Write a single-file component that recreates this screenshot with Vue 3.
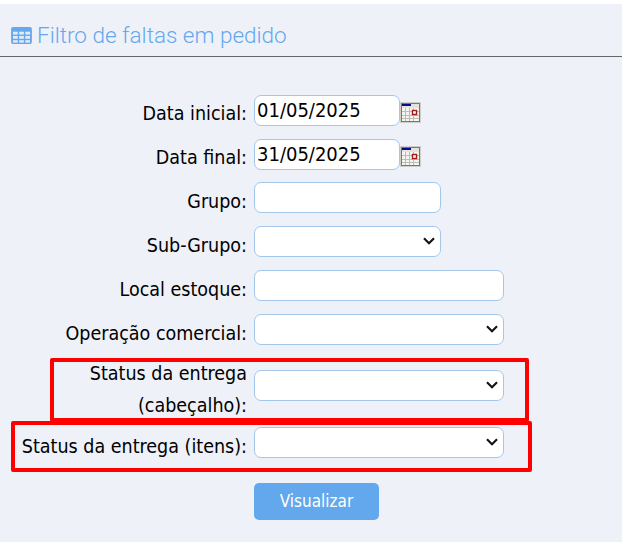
<script setup>
const rows = [
  { label: 'Data inicial:', type: 'date', value: '01/05/2025' },
  { label: 'Data final:', type: 'date', value: '31/05/2025' },
  { label: 'Grupo:', type: 'text', size: 'mid' },
  { label: 'Sub-Grupo:', type: 'select', size: 'mid' },
  { label: 'Local estoque:', type: 'text', size: 'wide' },
  { label: 'Operação comercial:', type: 'select', size: 'wide' },
  { label: 'Status da entrega (cabeçalho):', type: 'select', size: 'wide', tall: true },
  { label: 'Status da entrega (itens):', type: 'select', size: 'wide' },
];
</script>

<template>
  <div class="page">
    <div class="header">
      <svg class="table-icon" width="22" height="18" viewBox="0 0 22 18">
        <rect x="0" y="0" width="22" height="18" rx="2" fill="#66a8ee" />
        <g fill="#e3ecf8">
          <rect x="2" y="5" width="5" height="3" />
          <rect x="8.5" y="5" width="5" height="3" />
          <rect x="15" y="5" width="5" height="3" />
          <rect x="2" y="9.5" width="5" height="3" />
          <rect x="8.5" y="9.5" width="5" height="3" />
          <rect x="15" y="9.5" width="5" height="3" />
          <rect x="2" y="14" width="5" height="2.5" />
          <rect x="8.5" y="14" width="5" height="2.5" />
          <rect x="15" y="14" width="5" height="2.5" />
        </g>
      </svg>
      <span class="title">Filtro de faltas em pedido</span>
    </div>

    <form class="form" @submit.prevent>
      <div v-for="row in rows" :key="row.label" class="row" :class="{ tall: row.tall }">
        <label class="label">{{ row.label }}</label>
        <div class="control" :class="{ 'has-date': row.type === 'date' }">
          <template v-if="row.type === 'date'">
            <input class="field date" type="text" :value="row.value" />
            <svg class="cal" width="21" height="21" viewBox="0 0 21 21">
              <rect x="0" y="0" width="21" height="21" fill="#cfcfca" />
              <rect x="1" y="1" width="19" height="19" fill="#77777a" />
              <rect x="2" y="2" width="17" height="4" fill="#e4e4de" />
              <rect x="2" y="2" width="9" height="2" fill="#0a0a8c" />
              <rect x="2" y="6" width="17" height="13" fill="#f4f4f0" />
              <path d="M5.5 6v13M9.5 6v13M13.5 6v13M2 9.5h17M2 13.5h17M2 16.5h17" stroke="#bcbcb8" stroke-width="1" fill="none" />
              <rect x="12.5" y="8.5" width="4" height="4" fill="#fff" stroke="#a81818" stroke-width="1.4" />
            </svg>
          </template>
          <input v-else-if="row.type === 'text'" class="field" :class="row.size" type="text" />
          <select v-else class="field sel" :class="row.size"><option></option></select>
        </div>
      </div>

      <div class="row actions">
        <span class="label"></span>
        <button class="btn" type="button">Visualizar</button>
      </div>

      <div class="mark mark-one"></div>
      <div class="mark mark-two"></div>
    </form>
  </div>
</template>

<style>
html, body {
  margin: 0;
  background: #fff;
}
</style>

<style scoped>
.page {
  margin-top: 4px;
  width: 622px;
  height: 538px;
  background: #eef1f7;
  overflow: hidden;
  font-family: "DejaVu Sans", sans-serif;
  font-stretch: condensed;
  color: #000;
}
.header {
  display: flex;
  align-items: center;
  gap: 5px;
  height: 53px;
  box-sizing: border-box;
  padding: 10px 0 0 11px;
  border-bottom: 1px solid #66666c;
}
.table-icon {
  width: 21px;
  height: 17px;
}
.title {
  font-family: Roboto, sans-serif;
  font-stretch: normal;
  font-weight: 300;
  font-size: 22.5px;
  color: #66a8ee;
}
.form {
  position: relative;
  padding-top: 33px;
}
.row {
  display: grid;
  grid-template-columns: 247px auto;
  column-gap: 7px;
  align-items: center;
  height: 44px;
}
.row.tall {
  height: 68px;
}
.row.tall + .row {
  margin-top: 1px;
}
.label {
  padding-top: 3px;
  text-align: right;
  font-size: 19.5px;
  line-height: 32px;
}
.tall .label {
  padding-left: 40px;
}
.control {
  display: flex;
  align-items: center;
  margin-bottom: 6px;
}
.control.has-date {
  margin-bottom: 4px;
}
.cal {
  margin-top: 4px;
}
.field {
  box-sizing: border-box;
  height: 31px;
  padding: 0 2px;
  border: 1px solid #a3c7ea;
  border-radius: 7px;
  background: #fff;
  font: inherit;
  font-size: 20px;
  color: #000;
  outline: none;
}
.sel {
  appearance: none;
  background: #fff url("data:image/svg+xml,%3Csvg xmlns='http://www.w3.org/2000/svg' width='12' height='8' viewBox='0 0 12 8'%3E%3Cpath d='M1 1.2l5 5 5-5' fill='none' stroke='%23161616' stroke-width='2.2'/%3E%3C/svg%3E") no-repeat right 5px center;
}
.date {
  width: 146px;
}
.mid {
  width: 187px;
}
.wide {
  width: 250px;
}
.actions {
  margin-top: 12px;
}
.btn {
  width: 125px;
  height: 37px;
  border: 0;
  border-radius: 5px;
  background: #63a7ec;
  color: #fff;
  font: inherit;
  font-size: 17px;
}
.mark {
  position: absolute;
  box-sizing: border-box;
  border: 4px solid #f00;
  border-radius: 2px;
  pointer-events: none;
}
.mark-one {
  left: 50px;
  top: 301px;
  width: 479px;
  height: 64px;
}
.mark-two {
  left: 11px;
  top: 364px;
  width: 521px;
  height: 51px;
}
</style>
